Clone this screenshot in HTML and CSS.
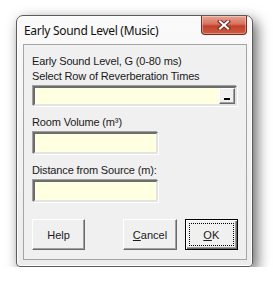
FILE: index.html
```html
<!DOCTYPE html>
<html lang="en">
<head>
  <meta charset="UTF-8">
  <title>Early Sound Level (Music)</title>
  <link rel="stylesheet" href="styles.css">
</head>
<body>

  <div class="window">
    <div class="titlebar">
      <span class="title">Early Sound Level (Music)</span>
      <button class="close" aria-label="Close">
        <svg width="14" height="10" viewBox="0 0 14 10">
          <path d="M3 1.5 L11 8.5 M11 1.5 L3 8.5" stroke="#6b2a22" stroke-width="4" stroke-linecap="square"/>
          <path d="M3 1.5 L11 8.5 M11 1.5 L3 8.5" stroke="#ffffff" stroke-width="2" stroke-linecap="square"/>
        </svg>
      </button>
    </div>

    <div class="client">
      <div class="label">Early Sound Level, G (0-80 ms)</div>
      <div class="label">Select Row of Reverberation Times</div>
      <div class="field field-wide">
        <span class="field-text"></span>
        <button class="pick"><span class="dash"></span></button>
      </div>

      <div class="label label-gap">Room Volume (m³)</div>
      <div class="field field-short"></div>

      <div class="label label-gap">Distance from Source (m):</div>
      <div class="field field-short"></div>

      <div class="actions">
        <button class="btn">Help</button>
        <span class="spacer"></span>
        <button class="btn"><u>C</u>ancel</button>
        <button class="btn btn-default"><span class="focus"><u>O</u>K</span></button>
      </div>
    </div>
  </div>

</body>
</html>
```

FILE: styles.css
```css
body {
  margin: 0;
  padding: 15px 0 0 16px;
  background-color: #ffffff;
}

.window {
  box-sizing: border-box;
  width: 237px;
  height: 252px;
  border: 1px solid #5b5b5b;
  border-radius: 7px 7px 4px 4px;
  background: linear-gradient(#fafafa, #ececec);
  box-shadow: inset 0 0 0 1px #ffffff, 4px 5px 14px rgba(0,0,0,0.6);
  display: flex;
  flex-direction: column;
}

.titlebar {
  height: 28px;
  display: flex;
  align-items: flex-start;
  padding-left: 7px;
}

.title {
  flex: 1;
  font-family: "Noto Sans", sans-serif;
  font-size: 12px;
  letter-spacing: -0.3px;
  line-height: 16px;
  margin-top: 7px;
  color: #111;
}

.close {
  width: 46px;
  height: 19px;
  margin-right: 5px;
  padding: 0;
  border: 1px solid #7a2a20;
  border-top: none;
  border-radius: 0 0 4px 4px;
  background: linear-gradient(#e7a394 0%, #d9705c 45%, #c2412b 55%, #cf5a43 100%);
  box-shadow: inset 0 0 0 1px rgba(255,255,255,0.35);
  display: flex;
  align-items: center;
  justify-content: center;
}

.client {
  flex: 1;
  margin: 0 5px 6px 6px;
  border: 1px solid #a5a5a5;
  background-color: #f0f0f0;
  padding: 9px 0 0 8px;
  display: flex;
  flex-direction: column;
  font-family: "Liberation Sans", Arial, sans-serif;
  font-size: 11px;
  letter-spacing: -0.15px;
  color: #1a1a1a;
}

.label {
  line-height: 15px;
  height: 15px;
}

.label-gap {
  margin-top: 9px;
}

.field {
  box-sizing: border-box;
  background-color: #ffffe1;
  border-style: solid;
  border-width: 2px;
  border-color: #6d6d6d #e3e3e3 #e3e3e3 #6d6d6d;
  box-shadow: -1px -1px 0 #a0a0a0, 1px 1px 0 #ffffff;
  margin-left: 1px;
  margin-top: 2px;
}

.field-wide {
  width: 204px;
  height: 20px;
  display: flex;
  justify-content: flex-end;
}

.field-short {
  width: 125px;
  height: 22px;
}

.field-text {
  flex: 1;
}

.pick {
  box-sizing: border-box;
  width: 16px;
  height: 16px;
  padding: 0;
  background-color: #f0f0f0;
  border: 1px solid;
  border-color: #ffffff #696969 #696969 #ffffff;
  box-shadow: inset -1px -1px 0 #a0a0a0;
  display: flex;
  align-items: flex-end;
  justify-content: center;
}

.dash {
  width: 6px;
  height: 2px;
  background-color: #000;
  margin-bottom: 3px;
}

.actions {
  display: flex;
  margin-top: 17px;
}

.spacer {
  width: 32px;
}

.btn {
  box-sizing: border-box;
  width: 56px;
  height: 31px;
  padding: 0;
  margin-right: 8px;
  font-family: "Liberation Sans", Arial, sans-serif;
  font-size: 11px;
  color: #1a1a1a;
  background-color: #f0f0f0;
  border: 1px solid;
  border-color: #ffffff #696969 #696969 #ffffff;
  box-shadow: inset -1px -1px 0 #a0a0a0;
}

.btn-default {
  border: 1px solid #000;
  box-shadow: inset 1px 1px 0 #ffffff, inset -1px -1px 0 #696969, inset -2px -2px 0 #a0a0a0;
  padding: 3px;
}

.focus {
  display: flex;
  align-items: center;
  justify-content: center;
  height: 100%;
  border: 1px dotted #000;
  box-sizing: border-box;
}
```
